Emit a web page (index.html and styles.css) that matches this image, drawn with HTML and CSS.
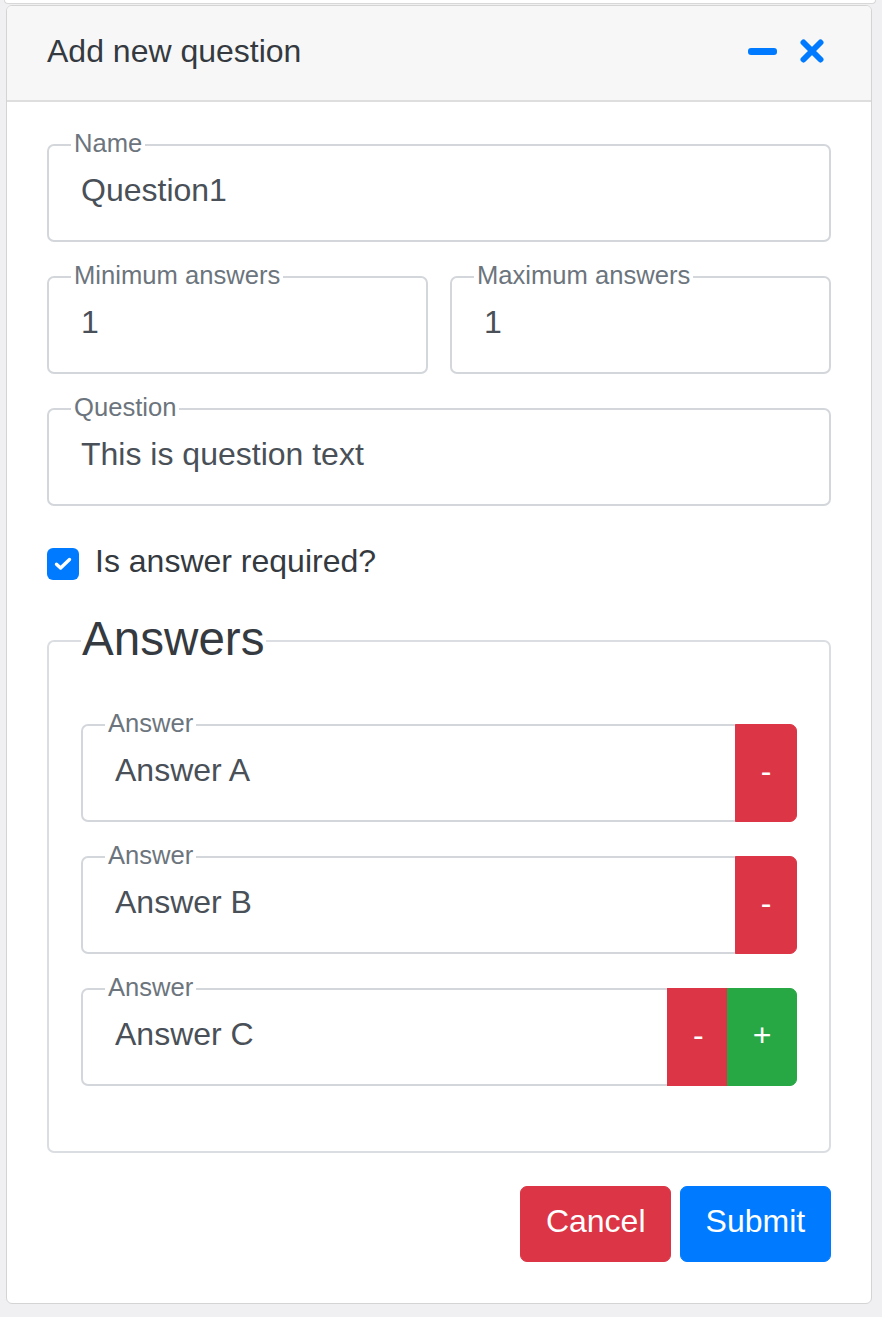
FILE: index.html
```html
<!DOCTYPE html>
<html lang="en">
<head>
<meta charset="utf-8">
<title>Add new question</title>
<link rel="stylesheet" href="styles.css">
</head>
<body>
<div class="page">
  <div class="prev-card"></div>
  <section class="card">
    <header class="card-header">
      <h1 class="card-title">Add new question</h1>
      <div class="card-tools">
        <button type="button" class="tool" aria-label="Minimize">
          <svg width="29" height="7" viewBox="0 0 29 7"><rect x="0" y="0" width="29" height="7" rx="3" fill="#007bff"/></svg>
        </button>
        <button type="button" class="tool" aria-label="Close">
          <svg width="24" height="24" viewBox="0 0 24 24"><path d="M3.5 3.5 L20.5 20.5 M20.5 3.5 L3.5 20.5" stroke="#007bff" stroke-width="6" stroke-linecap="round" fill="none"/></svg>
        </button>
      </div>
    </header>
    <form class="card-body">
      <fieldset class="field">
        <legend class="field-label">Name</legend>
        <input class="field-input" type="text" value="Question1">
      </fieldset>
      <div class="field-row">
        <fieldset class="field">
          <legend class="field-label">Minimum answers</legend>
          <input class="field-input" type="text" value="1">
        </fieldset>
        <fieldset class="field">
          <legend class="field-label">Maximum answers</legend>
          <input class="field-input" type="text" value="1">
        </fieldset>
      </div>
      <fieldset class="field field-spaced">
        <legend class="field-label">Question</legend>
        <input class="field-input" type="text" value="This is question text">
      </fieldset>
      <label class="check">
        <input class="check-input" type="checkbox" checked>
        <span class="check-box"><svg width="18" height="14" viewBox="0 0 18 14"><path d="M2.5 7.2 L6.6 11 L15.5 2.5" stroke="#fff" stroke-width="3.4" stroke-linecap="round" stroke-linejoin="round" fill="none"/></svg></span>
        <span class="check-text">Is answer required?</span>
      </label>
      <fieldset class="answers">
        <legend class="answers-title">Answers</legend>
        <div class="answer-list">
          <div class="answer-row">
            <fieldset class="field field-grouped">
              <legend class="field-label">Answer</legend>
              <input class="field-input" type="text" value="Answer A">
            </fieldset>
            <button type="button" class="btn btn-danger btn-addon btn-end">-</button>
          </div>
          <div class="answer-row">
            <fieldset class="field field-grouped">
              <legend class="field-label">Answer</legend>
              <input class="field-input" type="text" value="Answer B">
            </fieldset>
            <button type="button" class="btn btn-danger btn-addon btn-end">-</button>
          </div>
          <div class="answer-row">
            <fieldset class="field field-grouped">
              <legend class="field-label">Answer</legend>
              <input class="field-input" type="text" value="Answer C">
            </fieldset>
            <button type="button" class="btn btn-danger btn-addon">-</button>
            <button type="button" class="btn btn-success btn-addon btn-end">+</button>
          </div>
        </div>
      </fieldset>
      <div class="actions">
        <button type="button" class="btn btn-danger btn-lg">Cancel</button>
        <button type="submit" class="btn btn-primary btn-lg">Submit</button>
      </div>
    </form>
  </section>
</div>
</body>
</html>
```

FILE: styles.css
```css
html, body {
  margin: 0;
  padding: 0;
}

body {
  background: #f0f0f2;
  font-family: "Liberation Sans", Arial, sans-serif;
  color: #343a40;
}

.page {
  width: 882px;
  padding-bottom: 14px;
}

.prev-card {
  height: 3px;
  margin: 0 6px 0 4px;
  background: #fff;
  border: 1px solid #d8d8d8;
  border-top: 0;
  border-radius: 0 0 6px 6px;
}

.card {
  box-sizing: border-box;
  width: 866px;
  margin: 1px 0 0 6px;
  background: #fff;
  border: 1px solid #d4d4d4;
  border-radius: 6px;
  overflow: hidden;
}

.card-header {
  box-sizing: border-box;
  height: 96px;
  padding: 0 40px 4px;
  display: flex;
  align-items: center;
  justify-content: space-between;
  background: #f7f7f7;
  border-bottom: 2px solid #dedede;
}

.card-title {
  margin: 0;
  font-size: 32px;
  font-weight: 400;
  line-height: 38.4px;
  color: #343a40;
}

.card-tools {
  display: flex;
  align-items: center;
  gap: 23px;
  margin-right: 7px;
}

.tool {
  display: flex;
  align-items: center;
  padding: 0;
  border: 0;
  background: transparent;
}

.card-body {
  display: block;
  margin: 0;
  padding: 26px 40px 41px;
}

.field {
  margin: 0;
  min-width: 0;
  padding: 0 32px 30px;
  border: 2px solid #d3d7dc;
  border-radius: 7px;
}

.field-label {
  margin-left: -10px;
  padding: 0 3px 4px;
  font-size: 25.6px;
  line-height: 30px;
  color: #6c757d;
}

.field-input {
  display: block;
  box-sizing: border-box;
  width: 100%;
  height: 40px;
  margin: 8px 0 0;
  padding: 0;
  border: 0;
  background: transparent;
  font-family: "Liberation Sans", Arial, sans-serif;
  font-size: 32px;
  color: #495057;
  outline: none;
}

.field-row {
  display: grid;
  grid-template-columns: 1fr 1fr;
  gap: 22px;
  margin-top: 18px;
}

.field-spaced {
  margin-top: 18px;
}

.check {
  display: flex;
  align-items: flex-start;
  gap: 16px;
  margin-top: 35px;
  font-size: 32px;
  line-height: 40px;
  color: #343a40;
}

.check-input {
  display: none;
}

.check-box {
  width: 32px;
  height: 32px;
  margin-top: 7px;
  display: flex;
  align-items: center;
  justify-content: center;
  background: #007bff;
  border-radius: 6px;
}

.answers {
  margin: 30px 0 0;
  min-width: 0;
  padding: 0 32px 65px;
  border: 2px solid #dadee2;
  border-radius: 7px;
}

.answers-title {
  padding: 0 1px 4px;
  font-size: 47.6px;
  line-height: 56px;
  font-weight: 400;
  color: #343a40;
}

.answer-list {
  display: flex;
  flex-direction: column;
  gap: 18px;
  margin-top: 37px;
}

.answer-row {
  display: flex;
  align-items: stretch;
}

.field-grouped {
  flex: 1;
  border-top-right-radius: 0;
  border-bottom-right-radius: 0;
}

.btn {
  font-family: "Liberation Sans", Arial, sans-serif;
  font-size: 32px;
  line-height: 48px;
  color: #fff;
  border: 1px solid transparent;
  border-radius: 7px;
  cursor: pointer;
}

.btn-danger {
  background: #dc3545;
  border-color: #dc3545;
}

.btn-success {
  background: #28a745;
  border-color: #28a745;
}

.btn-primary {
  background: #007bff;
  border-color: #007bff;
}

.btn-addon {
  display: flex;
  align-items: center;
  justify-content: center;
  margin: 16px 0 0 -2px;
  padding: 0 24.6px 5px;
  border-radius: 0;
}

.btn-end {
  border-radius: 0 7px 7px 0;
}

.btn-lg {
  padding: 9.8px 24.8px 15.8px;
}

.actions {
  display: flex;
  justify-content: flex-end;
  gap: 8.5px;
  margin-top: 33px;
}
```
